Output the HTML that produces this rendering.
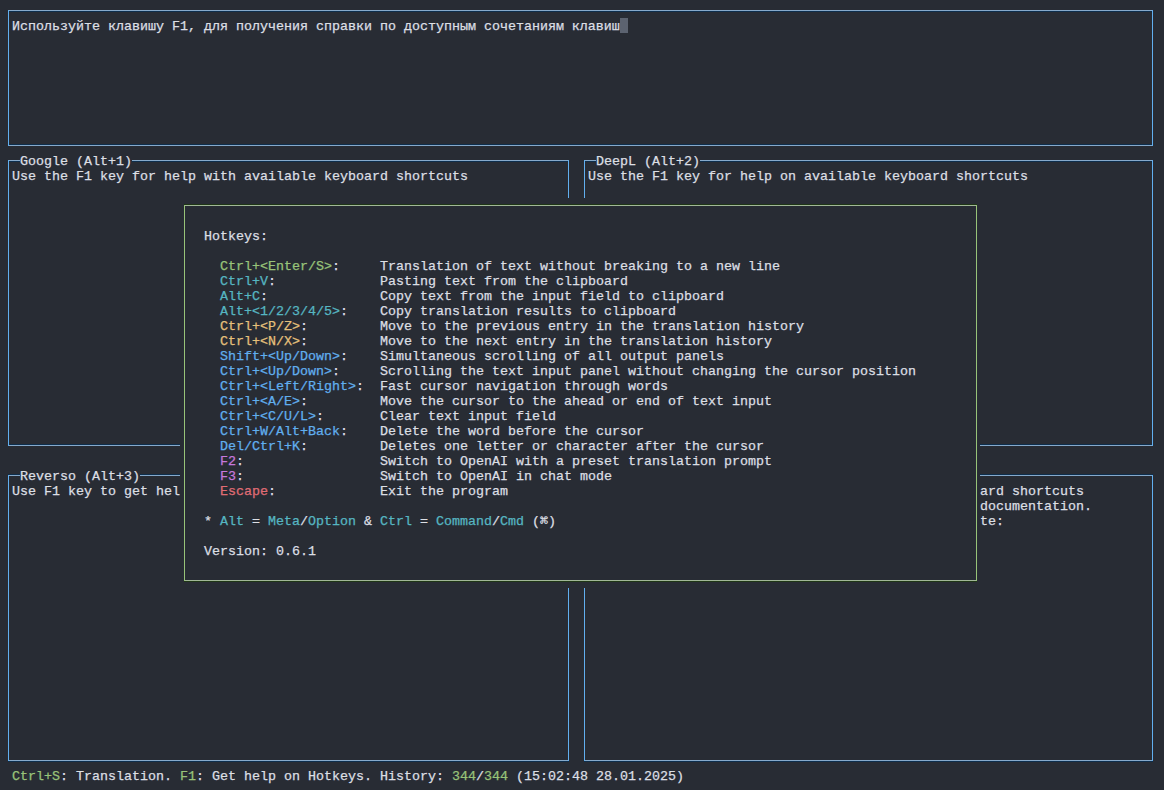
<!DOCTYPE html>
<html><head><meta charset="utf-8"><style>
html,body{margin:0;padding:0;}
body{width:1164px;height:790px;overflow:hidden;background:#282c34;position:relative;font-family:"Liberation Mono",monospace;}
.b{position:absolute;border:1px solid #61afef;box-sizing:content-box;}
.f{position:absolute;background:#282c34;}
.t{position:absolute;white-space:pre;font-size:13.333px;line-height:15px;height:15px;color:#dcdfe4;-webkit-text-stroke:0.25px currentColor;}
.bgc{background:#282c34;}
</style></head><body>
<div class="f" style="left:8px;top:10px;width:1px;height:136px;background:#61afef"></div>
<div class="f" style="left:1152px;top:10px;width:1px;height:136px;background:#61afef"></div>
<div class="f" style="left:9px;top:10px;width:1143px;height:1px;background:#86aacb"></div>
<div class="f" style="left:9px;top:11px;width:1143px;height:1px;background:#0e2e4c"></div>
<div class="f" style="left:9px;top:145px;width:1143px;height:1px;background:#86aacb"></div>
<div class="f" style="left:9px;top:144px;width:1143px;height:1px;background:#0e2e4c"></div>
<div class="t" style="left:12px;top:19px">Используйте клавишу F1, для получения справки по доступным сочетаниям клавиш</div>
<div class="f" style="left:620px;top:18px;width:8px;height:15px;background:#5c6370"></div>
<div class="f" style="left:8px;top:160px;width:1px;height:286px;background:#61afef"></div>
<div class="f" style="left:568px;top:160px;width:1px;height:286px;background:#61afef"></div>
<div class="f" style="left:9px;top:160px;width:559px;height:1px;background:#86aacb"></div>
<div class="f" style="left:9px;top:161px;width:559px;height:1px;background:#0e2e4c"></div>
<div class="f" style="left:9px;top:445px;width:559px;height:1px;background:#86aacb"></div>
<div class="f" style="left:9px;top:444px;width:559px;height:1px;background:#0e2e4c"></div>
<div class="t bgc" style="left:20px;top:154px">Google (Alt+1)</div>
<div class="t" style="left:12px;top:169px">Use the F1 key for help with available keyboard shortcuts</div>
<div class="f" style="left:584px;top:160px;width:1px;height:286px;background:#61afef"></div>
<div class="f" style="left:1152px;top:160px;width:1px;height:286px;background:#61afef"></div>
<div class="f" style="left:585px;top:160px;width:567px;height:1px;background:#86aacb"></div>
<div class="f" style="left:585px;top:161px;width:567px;height:1px;background:#0e2e4c"></div>
<div class="f" style="left:585px;top:445px;width:567px;height:1px;background:#86aacb"></div>
<div class="f" style="left:585px;top:444px;width:567px;height:1px;background:#0e2e4c"></div>
<div class="t bgc" style="left:596px;top:154px">DeepL (Alt+2)</div>
<div class="t" style="left:588px;top:169px">Use the F1 key for help on available keyboard shortcuts</div>
<div class="f" style="left:8px;top:475px;width:1px;height:286px;background:#61afef"></div>
<div class="f" style="left:568px;top:475px;width:1px;height:286px;background:#61afef"></div>
<div class="f" style="left:9px;top:475px;width:559px;height:1px;background:#86aacb"></div>
<div class="f" style="left:8px;top:474px;width:561px;height:1px;background:#0e2e4c"></div>
<div class="f" style="left:9px;top:760px;width:559px;height:1px;background:#86aacb"></div>
<div class="f" style="left:8px;top:761px;width:561px;height:1px;background:#0e2e4c"></div>
<div class="t bgc" style="left:20px;top:469px">Reverso (Alt+3)</div>
<div class="t" style="left:12px;top:484px">Use F1 key to get help with available keyboard shortcuts</div>
<div class="f" style="left:584px;top:475px;width:1px;height:286px;background:#61afef"></div>
<div class="f" style="left:1152px;top:475px;width:1px;height:286px;background:#61afef"></div>
<div class="f" style="left:585px;top:475px;width:567px;height:1px;background:#86aacb"></div>
<div class="f" style="left:584px;top:474px;width:569px;height:1px;background:#0e2e4c"></div>
<div class="f" style="left:585px;top:760px;width:567px;height:1px;background:#86aacb"></div>
<div class="f" style="left:584px;top:761px;width:569px;height:1px;background:#0e2e4c"></div>
<div class="t bgc" style="left:596px;top:469px">OpenAI (Alt+4)</div>
<div class="t" style="left:980px;top:484px">ard shortcuts</div>
<div class="t" style="left:980px;top:499px">documentation.</div>
<div class="t" style="left:980px;top:514px">te:</div>
<div class="f" style="left:180px;top:198px;width:800px;height:390px"></div>
<div class="f" style="left:184px;top:205px;width:1px;height:376px;background:#98c379"></div>
<div class="f" style="left:976px;top:205px;width:1px;height:376px;background:#98c379"></div>
<div class="f" style="left:185px;top:205px;width:791px;height:1px;background:#a1b897"></div>
<div class="f" style="left:184px;top:204px;width:793px;height:1px;background:#1f3616"></div>
<div class="f" style="left:185px;top:580px;width:791px;height:1px;background:#a1b897"></div>
<div class="f" style="left:184px;top:581px;width:793px;height:1px;background:#1f3616"></div>
<div class="t" style="left:204px;top:229px">Hotkeys:</div>
<div class="t" style="left:220px;top:259px"><span style="color:#98c379">Ctrl+&lt;Enter/S&gt;</span>:</div>
<div class="t" style="left:380px;top:259px">Translation of text without breaking to a new line</div>
<div class="t" style="left:220px;top:274px"><span style="color:#56b6c2">Ctrl+V</span>:</div>
<div class="t" style="left:380px;top:274px">Pasting text from the clipboard</div>
<div class="t" style="left:220px;top:289px"><span style="color:#56b6c2">Alt+C</span>:</div>
<div class="t" style="left:380px;top:289px">Copy text from the input field to clipboard</div>
<div class="t" style="left:220px;top:304px"><span style="color:#56b6c2">Alt+&lt;1/2/3/4/5&gt;</span>:</div>
<div class="t" style="left:380px;top:304px">Copy translation results to clipboard</div>
<div class="t" style="left:220px;top:319px"><span style="color:#e5c07b">Ctrl+&lt;P/Z&gt;</span>:</div>
<div class="t" style="left:380px;top:319px">Move to the previous entry in the translation history</div>
<div class="t" style="left:220px;top:334px"><span style="color:#e5c07b">Ctrl+&lt;N/X&gt;</span>:</div>
<div class="t" style="left:380px;top:334px">Move to the next entry in the translation history</div>
<div class="t" style="left:220px;top:349px"><span style="color:#61afef">Shift+&lt;Up/Down&gt;</span>:</div>
<div class="t" style="left:380px;top:349px">Simultaneous scrolling of all output panels</div>
<div class="t" style="left:220px;top:364px"><span style="color:#61afef">Ctrl+&lt;Up/Down&gt;</span>:</div>
<div class="t" style="left:380px;top:364px">Scrolling the text input panel without changing the cursor position</div>
<div class="t" style="left:220px;top:379px"><span style="color:#61afef">Ctrl+&lt;Left/Right&gt;</span>:</div>
<div class="t" style="left:380px;top:379px">Fast cursor navigation through words</div>
<div class="t" style="left:220px;top:394px"><span style="color:#61afef">Ctrl+&lt;A/E&gt;</span>:</div>
<div class="t" style="left:380px;top:394px">Move the cursor to the ahead or end of text input</div>
<div class="t" style="left:220px;top:409px"><span style="color:#61afef">Ctrl+&lt;C/U/L&gt;</span>:</div>
<div class="t" style="left:380px;top:409px">Clear text input field</div>
<div class="t" style="left:220px;top:424px"><span style="color:#61afef">Ctrl+W/Alt+Back</span>:</div>
<div class="t" style="left:380px;top:424px">Delete the word before the cursor</div>
<div class="t" style="left:220px;top:439px"><span style="color:#61afef">Del/Ctrl+K</span>:</div>
<div class="t" style="left:380px;top:439px">Deletes one letter or character after the cursor</div>
<div class="t" style="left:220px;top:454px"><span style="color:#c678dd">F2</span>:</div>
<div class="t" style="left:380px;top:454px">Switch to OpenAI with a preset translation prompt</div>
<div class="t" style="left:220px;top:469px"><span style="color:#c678dd">F3</span>:</div>
<div class="t" style="left:380px;top:469px">Switch to OpenAI in chat mode</div>
<div class="t" style="left:220px;top:484px"><span style="color:#e06c75">Escape</span>:</div>
<div class="t" style="left:380px;top:484px">Exit the program</div>
<div class="t" style="left:204px;top:514px">* <span style="color:#56b6c2">Alt</span> = <span style="color:#56b6c2">Meta</span>/<span style="color:#56b6c2">Option</span> &amp; <span style="color:#56b6c2">Ctrl</span> = <span style="color:#56b6c2">Command</span>/<span style="color:#56b6c2">Cmd</span> (⌘)</div>
<div class="t" style="left:204px;top:544px">Version: 0.6.1</div>
<div class="t" style="left:12px;top:769px"><span style="color:#98c379">Ctrl+S</span>: Translation. <span style="color:#98c379">F1</span>: Get help on Hotkeys. History: <span style="color:#98c379">344</span>/<span style="color:#98c379">344</span> (15:02:48 28.01.2025)</div>
</body></html>
